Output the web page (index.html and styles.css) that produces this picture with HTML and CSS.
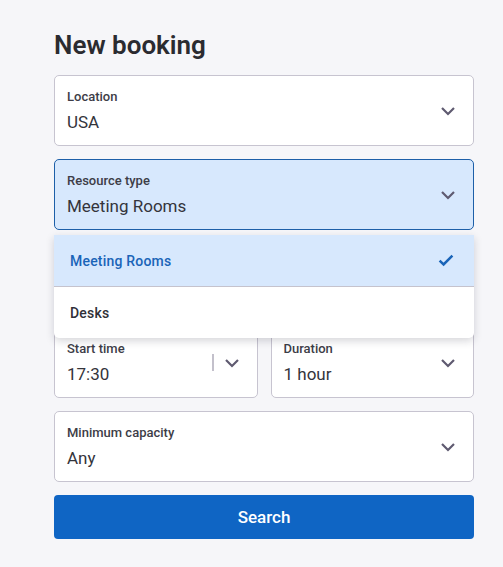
FILE: index.html
```html
<!DOCTYPE html>
<html lang="en">
<head>
<meta charset="utf-8">
<title>New booking</title>
<link rel="stylesheet" href="styles.css">
</head>
<body>
<main class="page">
  <h1 class="title">New booking</h1>
  <form class="form">
    <div class="field">
      <div class="field-text">
        <span class="label">Location</span>
        <span class="value">USA</span>
      </div>
      <svg class="chev" viewBox="0 0 16 10" width="16" height="10"><polyline points="2,2 8,8 14,2"/></svg>
    </div>

    <div class="select-wrap">
      <div class="field field-open">
        <div class="field-text">
          <span class="label">Resource type</span>
          <span class="value">Meeting Rooms</span>
        </div>
        <svg class="chev" viewBox="0 0 16 10" width="16" height="10"><polyline points="2,2 8,8 14,2"/></svg>
      </div>
      <ul class="menu">
        <li class="option option-selected">
          <span>Meeting Rooms</span>
          <svg class="check" viewBox="0 0 16 13" width="16" height="13"><polyline points="1.6,6.6 5.6,10.4 14.4,1.6"/></svg>
        </li>
        <li class="option"><span>Desks</span></li>
      </ul>
    </div>

    <div class="field field-covered">
      <div class="field-text">
        <span class="label">Date</span>
        <span class="value">Today</span>
      </div>
      <svg class="chev" viewBox="0 0 16 10" width="16" height="10"><polyline points="2,2 8,8 14,2"/></svg>
    </div>

    <div class="row">
      <div class="field field-time">
        <div class="field-text">
          <span class="label">Start time</span>
          <span class="value">17:30</span>
        </div>
        <span class="sep"></span>
        <svg class="chev" viewBox="0 0 16 10" width="16" height="10"><polyline points="2,2 8,8 14,2"/></svg>
      </div>
      <div class="field">
        <div class="field-text">
          <span class="label">Duration</span>
          <span class="value">1 hour</span>
        </div>
        <svg class="chev" viewBox="0 0 16 10" width="16" height="10"><polyline points="2,2 8,8 14,2"/></svg>
      </div>
    </div>

    <div class="field">
      <div class="field-text">
        <span class="label">Minimum capacity</span>
        <span class="value">Any</span>
      </div>
      <svg class="chev" viewBox="0 0 16 10" width="16" height="10"><polyline points="2,2 8,8 14,2"/></svg>
    </div>

    <button type="button" class="search">Search</button>
  </form>
</main>
</body>
</html>
```

FILE: styles.css
```css
html, body {
  margin: 0;
  padding: 0;
  background: #f6f6f9;
}

body {
  font-family: Roboto, "Liberation Sans", Arial, sans-serif;
  color: #2f2f36;
}

.page {
  width: 420px;
  padding: 30px 0 0 54px;
}

.title {
  margin: 0 0 15px 0;
  font-size: 26px;
  line-height: 30px;
  font-weight: 600;
  color: #2b2b30;
}

.form {
  display: flex;
  flex-direction: column;
  gap: 13px;
  margin: 0;
}

.field {
  box-sizing: border-box;
  height: 71px;
  background: #ffffff;
  border: 1px solid #c7c4d0;
  border-radius: 5px;
  padding: 13px 17px 0 12px;
  display: flex;
  align-items: flex-start;
}

.field-text {
  flex: 1;
  display: flex;
  flex-direction: column;
  min-width: 0;
}

.label {
  font-size: 13px;
  line-height: 16px;
  font-weight: 500;
  color: #3d3d47;
}

.value {
  margin-top: 6px;
  font-size: 17px;
  line-height: 22px;
  color: #34343b;
}

.chev {
  align-self: center;
  margin-top: -13px;
  fill: none;
  stroke: #5f5a70;
  stroke-width: 2.2;
}

.field-open {
  background: #d7e8fd;
  border-color: #1d5fa8;
}

.field-covered .field-text {
  visibility: hidden;
}

.select-wrap {
  position: relative;
}

.menu {
  position: absolute;
  left: 0;
  right: 0;
  top: calc(100% + 5px);
  margin: 0;
  padding: 0;
  list-style: none;
  background: #ffffff;
  border-radius: 0 0 5px 5px;
  box-shadow: 0 3px 9px rgba(30, 30, 50, 0.18);
  z-index: 2;
  overflow: hidden;
}

.option {
  box-sizing: border-box;
  height: 51px;
  padding: 0 20px 0 16px;
  display: flex;
  align-items: center;
  justify-content: space-between;
  font-size: 14px;
  font-weight: 500;
  letter-spacing: 0.2px;
  color: #303038;
}

.option-selected {
  background: #d7e8fd;
  color: #1a64b8;
  border-bottom: 1px solid #c5c3cd;
  height: 52px;
}

.check {
  fill: none;
  stroke: #1a64b8;
  stroke-width: 2.5;
}

.row {
  display: grid;
  grid-template-columns: 1fr 1fr;
  gap: 13px;
}

.field-time .sep {
  align-self: center;
  margin-top: -13px;
  width: 2px;
  height: 17px;
  background: #c3c0cb;
  margin-right: 10px;
}

.search {
  height: 44px;
  border: none;
  border-radius: 4px;
  background: #0f65c4;
  color: #ffffff;
  font-family: Roboto, "Liberation Sans", Arial, sans-serif;
  font-size: 17px;
  font-weight: 500;
  cursor: pointer;
}
```
